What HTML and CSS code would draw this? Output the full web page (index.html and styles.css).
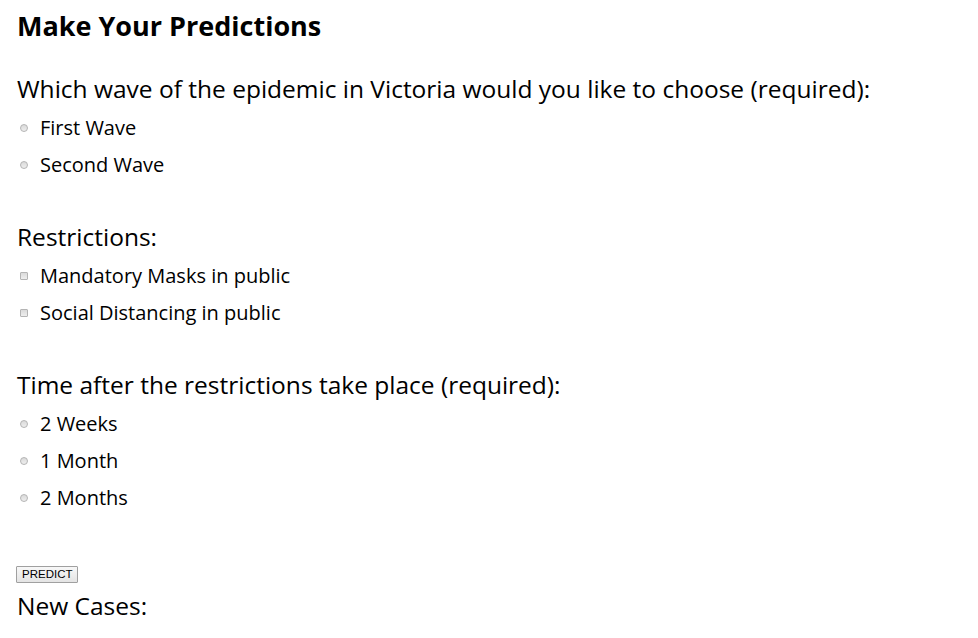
FILE: index.html
```html
<!DOCTYPE html>
<html>
<head>
<meta charset="utf-8">
<link rel="stylesheet" href="styles.css">
</head>
<body>
<div class="page">
  <h1 class="title">Make Your Predictions</h1>
  <div class="group">
    <div class="question">Which wave of the epidemic in Victoria would you like to choose (required):</div>
    <label class="option"><input type="radio" name="wave" class="radio"><span>First Wave</span></label>
    <label class="option"><input type="radio" name="wave" class="radio"><span>Second Wave</span></label>
  </div>
  <div class="group">
    <div class="question">Restrictions:</div>
    <label class="option"><input type="checkbox" class="check"><span>Mandatory Masks in public</span></label>
    <label class="option"><input type="checkbox" class="check"><span>Social Distancing in public</span></label>
  </div>
  <div class="group">
    <div class="question">Time after the restrictions take place (required):</div>
    <label class="option"><input type="radio" name="time" class="radio"><span>2 Weeks</span></label>
    <label class="option"><input type="radio" name="time" class="radio"><span>1 Month</span></label>
    <label class="option"><input type="radio" name="time" class="radio"><span>2 Months</span></label>
  </div>
  <div class="actions"><button class="predict">PREDICT</button></div>
  <div class="question result">New Cases:</div>
</div>
</body>
</html>
```
FILE: styles.css
```css
html, body {
  margin: 0;
  padding: 0;
  background: #ffffff;
}
.page {
  padding: 8px 16px 0 17px;
  font-family: "Open Sans", sans-serif;
  color: #000;
}
.title {
  margin: 0;
  font-size: 27px;
  font-weight: bold;
  line-height: 36px;
}
.group {
  margin-top: 38px;
}
.group:first-of-type {
  margin-top: 29px;
}
.question {
  font-size: 24.5px;
  line-height: 32px;
  margin-bottom: 4px;
}
.option {
  display: flex;
  align-items: center;
  height: 37px;
  font-size: 20px;
}
.radio, .check {
  appearance: none;
  -webkit-appearance: none;
  width: 8px;
  height: 8px;
  margin: 0 12px 0 3px;
  border: 1px solid #b4b4b4;
  background: linear-gradient(#dadada, #eeeeee);
  box-sizing: border-box;
}
.radio {
  border-radius: 50%;
}
.check {
  border-radius: 1px;
}
.actions {
  margin-top: 50px;
  display: flex;
}
.predict {
  font-family: "Liberation Sans", Arial, sans-serif;
  font-size: 11.5px;
  padding: 0 5px;
  margin: 0 0 0 -1px;
  height: 17px;
  width: 62px;
  line-height: 15px;
  border: 1px solid #a0a0a0;
  border-radius: 1px;
  background: linear-gradient(#f8f8f8, #e4e4e4);
  color: #000;
}
.result {
  margin-top: 7px;
}
```
